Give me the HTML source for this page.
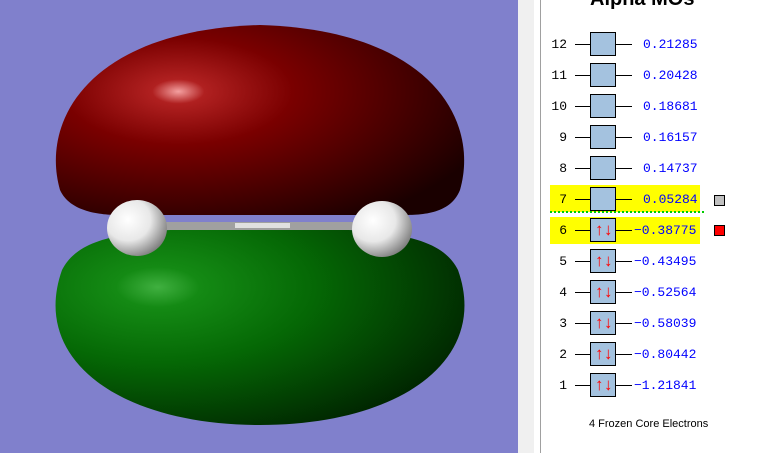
<!DOCTYPE html>
<html><head><style>
body{margin:0;width:758px;height:453px;overflow:hidden;background:#fff;font-family:"Liberation Sans",sans-serif;position:relative}
.l{position:absolute}
.row{position:absolute;left:545px;width:160px;height:24px}
.num{position:absolute;left:0;width:22px;text-align:right;font:13px "Liberation Mono",monospace;top:5px;color:#000}
.ln{position:absolute;height:1px;background:#000;top:12px}
.box{position:absolute;left:45px;top:0;width:24px;height:22px;border:1px solid #000;background:#a4c2df}
.en{position:absolute;left:88px;top:5px;font:13px "Liberation Mono",monospace;color:#0000ff}
.ar{position:absolute;top:0;color:#f00;font-size:17px;line-height:22px}
</style></head><body>
<svg class="l" style="left:0;top:0" width="518" height="453">
<defs>
<radialGradient id="rg" cx="0.3" cy="0.35" r="0.8">
<stop offset="0" stop-color="#f4a0a0"/><stop offset="0.08" stop-color="#b02020"/><stop offset="0.35" stop-color="#7a0000"/><stop offset="1" stop-color="#1a0000"/></radialGradient>
<radialGradient id="gg" cx="0.25" cy="0.3" r="0.85">
<stop offset="0" stop-color="#40b040"/><stop offset="0.12" stop-color="#148a14"/><stop offset="0.45" stop-color="#056805"/><stop offset="1" stop-color="#002000"/></radialGradient>
<radialGradient id="wg" cx="0.35" cy="0.35" r="0.75">
<stop offset="0" stop-color="#fff"/><stop offset="0.5" stop-color="#e8e8e8"/><stop offset="1" stop-color="#707070"/></radialGradient>
</defs>
<rect width="518" height="453" fill="#8080cc"/>
<path d="M60,190 C40,120 90,30 260,25 C430,30 480,120 460,190 C450,215 420,215 400,215 L120,215 C100,215 70,212 60,190Z" fill="url(#rg)"/>
<path d="M62,270 C80,235 130,228 260,228 C390,228 440,235 458,270 C490,360 400,425 260,425 C120,425 30,360 62,270Z" fill="url(#gg)"/>
<rect x="160" y="222" width="195" height="8" fill="#a0a0a0"/>
<rect x="235" y="223" width="55" height="5" fill="#e0e0e0"/>
<ellipse cx="137" cy="228" rx="30" ry="28" fill="url(#wg)"/>
<ellipse cx="382" cy="229" rx="30" ry="28" fill="url(#wg)"/>
</svg>
<div class="l" style="left:518px;top:0;width:16px;height:453px;background:#f0f0f0"></div>
<div class="l" style="left:540px;top:0;width:1px;height:453px;background:#a0a0a0"></div>
<div class="l" style="left:590px;top:-12px;font-weight:bold;font-size:20px">Alpha MOs</div>
<div class="l" style="left:550px;top:185px;width:150px;height:27px;background:#ffff00"></div>
<div class="l" style="left:550px;top:217px;width:150px;height:27px;background:#ffff00"></div>
<div class="l" style="left:550px;top:211px;width:154px;border-top:2px dotted #00cc00"></div>
<div class="l" style="left:714px;top:195px;width:9px;height:9px;border:1px solid #000;background:#c0c0c0"></div>
<div class="l" style="left:714px;top:225px;width:9px;height:9px;border:1px solid #000;background:#ff0000"></div>
<div id="rows"></div>
<div class="l" style="left:589px;top:418px;font-size:11px">4 Frozen Core Electrons</div>
<script>
var e=["0.21285","0.20428","0.18681","0.16157","0.14737","0.05284","-0.38775","-0.43495","-0.52564","-0.58039","-0.80442","-1.21841"];
var h="";
for(var i=0;i<12;i++){var n=12-i,y=32+i*31,occ=n<=6,neg=e[i][0]=="-";
h+='<div class="row" style="top:'+y+'px"><div class="num">'+n+'</div><div class="ln" style="left:30px;width:15px"></div><div class="box">'+(occ?'<span class="ar" style="left:4px">&#8593;</span><span class="ar" style="left:13px">&#8595;</span>':'')+'</div><div class="ln" style="left:70px;width:17px"></div><div class="en" style="left:'+(neg?89:98)+'px">'+(neg?'\u2212'+e[i].slice(1):e[i])+'</div></div>';}
document.getElementById("rows").innerHTML=h;
</script>
</body></html>
